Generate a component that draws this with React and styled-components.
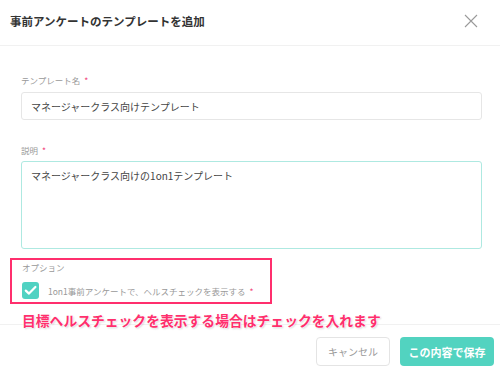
import React from 'react';
import styled, { createGlobalStyle } from 'styled-components';

const GlobalStyle = createGlobalStyle`
   body {
      margin: 0;
      background: #fff;
      font-family: "Noto Sans CJK JP", "Noto Sans", sans-serif;
   }
`

const Dialog = styled.div`
   width: 500px;
   height: 373px;
   overflow: hidden;
   background: #fff;
`

const Header = styled.header`
   height: 46px;
   box-sizing: border-box;
   display: flex;
   align-items: center;
   justify-content: space-between;
   padding: 0 22px 4px 10px;
   border-bottom: 1px solid #f1f1f1;
`

const Title = styled.h1`
   margin: 0;
   font-size: 11.5px;
   font-weight: 700;
   color: #333;
`

const CloseButton = styled.button`
   border: none;
   background: none;
   padding: 0;
   width: 14px;
   height: 14px;
   display: flex;
   cursor: pointer;
`

const Body = styled.div`
   padding: 28px 18px 0 21px;
`

const Label = styled.div`
   font-size: 8.5px;
   line-height: 12px;
   color: #999;
   margin-bottom: ${props => props.tight ? '5px' : '6px'};
   margin-top: ${props => props.gap || '0'};
`

const Required = styled.span`
   color: #f2457a;
   margin-left: 4px;
`

const TextInput = styled.div`
   box-sizing: border-box;
   height: 28px;
   display: flex;
   align-items: center;
   padding-left: 9px;
   border: 1px solid #e6e6e6;
   border-radius: 3px;
   font-size: 10px;
   color: #444;
`

const TextArea = styled.div`
   box-sizing: border-box;
   height: 88px;
   padding: 6px 9px;
   border: 1px solid #aee9e1;
   border-radius: 3px;
   font-size: 10px;
   line-height: 16px;
   color: #444;
`

const OptionBox = styled.div`
   box-sizing: border-box;
   width: 262px;
   height: 46px;
   margin: 9px 0 0 -11px;
   padding: 1px 0 0 10px;
   border: 2px solid #ff2f6d;
`

const OptionTitle = styled.div`
   font-size: 8.5px;
   line-height: 12px;
   color: #999;
`

const CheckRow = styled.label`
   display: flex;
   align-items: center;
   gap: 9px;
   margin-top: 9px;
   font-size: 8.5px;
   color: #999;
`

const Checkbox = styled.span`
   width: 17px;
   height: 17px;
   border-radius: 3px;
   background: #50d2c2;
   display: flex;
   align-items: center;
   justify-content: center;
`

const Annotation = styled.div`
   position: relative;
   z-index: 1;
   margin: 8px 0 -4px 1px;
   font-size: 13.8px;
   line-height: 16px;
   font-weight: 700;
   color: #ff2f6d;
   text-shadow: 0 0 2px #fff, 0 0 2px #fff, 1px 1px 2px rgba(0, 0, 0, 0.2);
`

const Footer = styled.footer`
   display: flex;
   justify-content: flex-end;
   gap: 10px;
   padding: 12px 6px 0 0;
   border-top: 1px solid #f1f1f1;
`

const Button = styled.button`
   box-sizing: border-box;
   height: 29px;
   width: ${props => props.main ? '94px' : '74px'};
   border-radius: 4px;
   border: ${props => props.main ? 'none' : '1px solid #e4e4e4'};
   background: ${props => props.main ? '#52d3c0' : '#fff'};
   color: ${props => props.main ? '#fff' : '#999'};
   font-family: inherit;
   font-size: ${props => props.main ? '11px' : '10px'};
   font-weight: ${props => props.main ? 700 : 400};
   cursor: pointer;
`

const App = () => {
   return (
      <Dialog>
         <GlobalStyle />
         <Header>
            <Title>事前アンケートのテンプレートを追加</Title>
            <CloseButton aria-label="close">
               <svg width="14" height="14" viewBox="0 0 14 14">
                  <path d="M1 1 L13 13 M13 1 L1 13" stroke="#9a9a9a" strokeWidth="1.1" fill="none" />
               </svg>
            </CloseButton>
         </Header>
         <Body>
            <Label>テンプレート名<Required>*</Required></Label>
            <TextInput>マネージャークラス向けテンプレート</TextInput>
            <Label gap="24px" tight>説明<Required>*</Required></Label>
            <TextArea>マネージャークラス向けの1on1テンプレート</TextArea>
            <OptionBox>
               <OptionTitle>オプション</OptionTitle>
               <CheckRow>
                  <Checkbox>
                     <svg width="13" height="11" viewBox="0 0 13 11">
                        <path d="M1.8 5.6 L5 8.6 L11.4 2" stroke="#fff" strokeWidth="2.2" fill="none" strokeLinecap="round" strokeLinejoin="round" />
                     </svg>
                  </Checkbox>
                  <span>1on1事前アンケートで、ヘルスチェックを表示する<Required>*</Required></span>
               </CheckRow>
            </OptionBox>
            <Annotation>目標ヘルスチェックを表示する場合はチェックを入れます</Annotation>
         </Body>
         <Footer>
            <Button>キャンセル</Button>
            <Button main>この内容で保存</Button>
         </Footer>
      </Dialog>
   );
}

export default App;
